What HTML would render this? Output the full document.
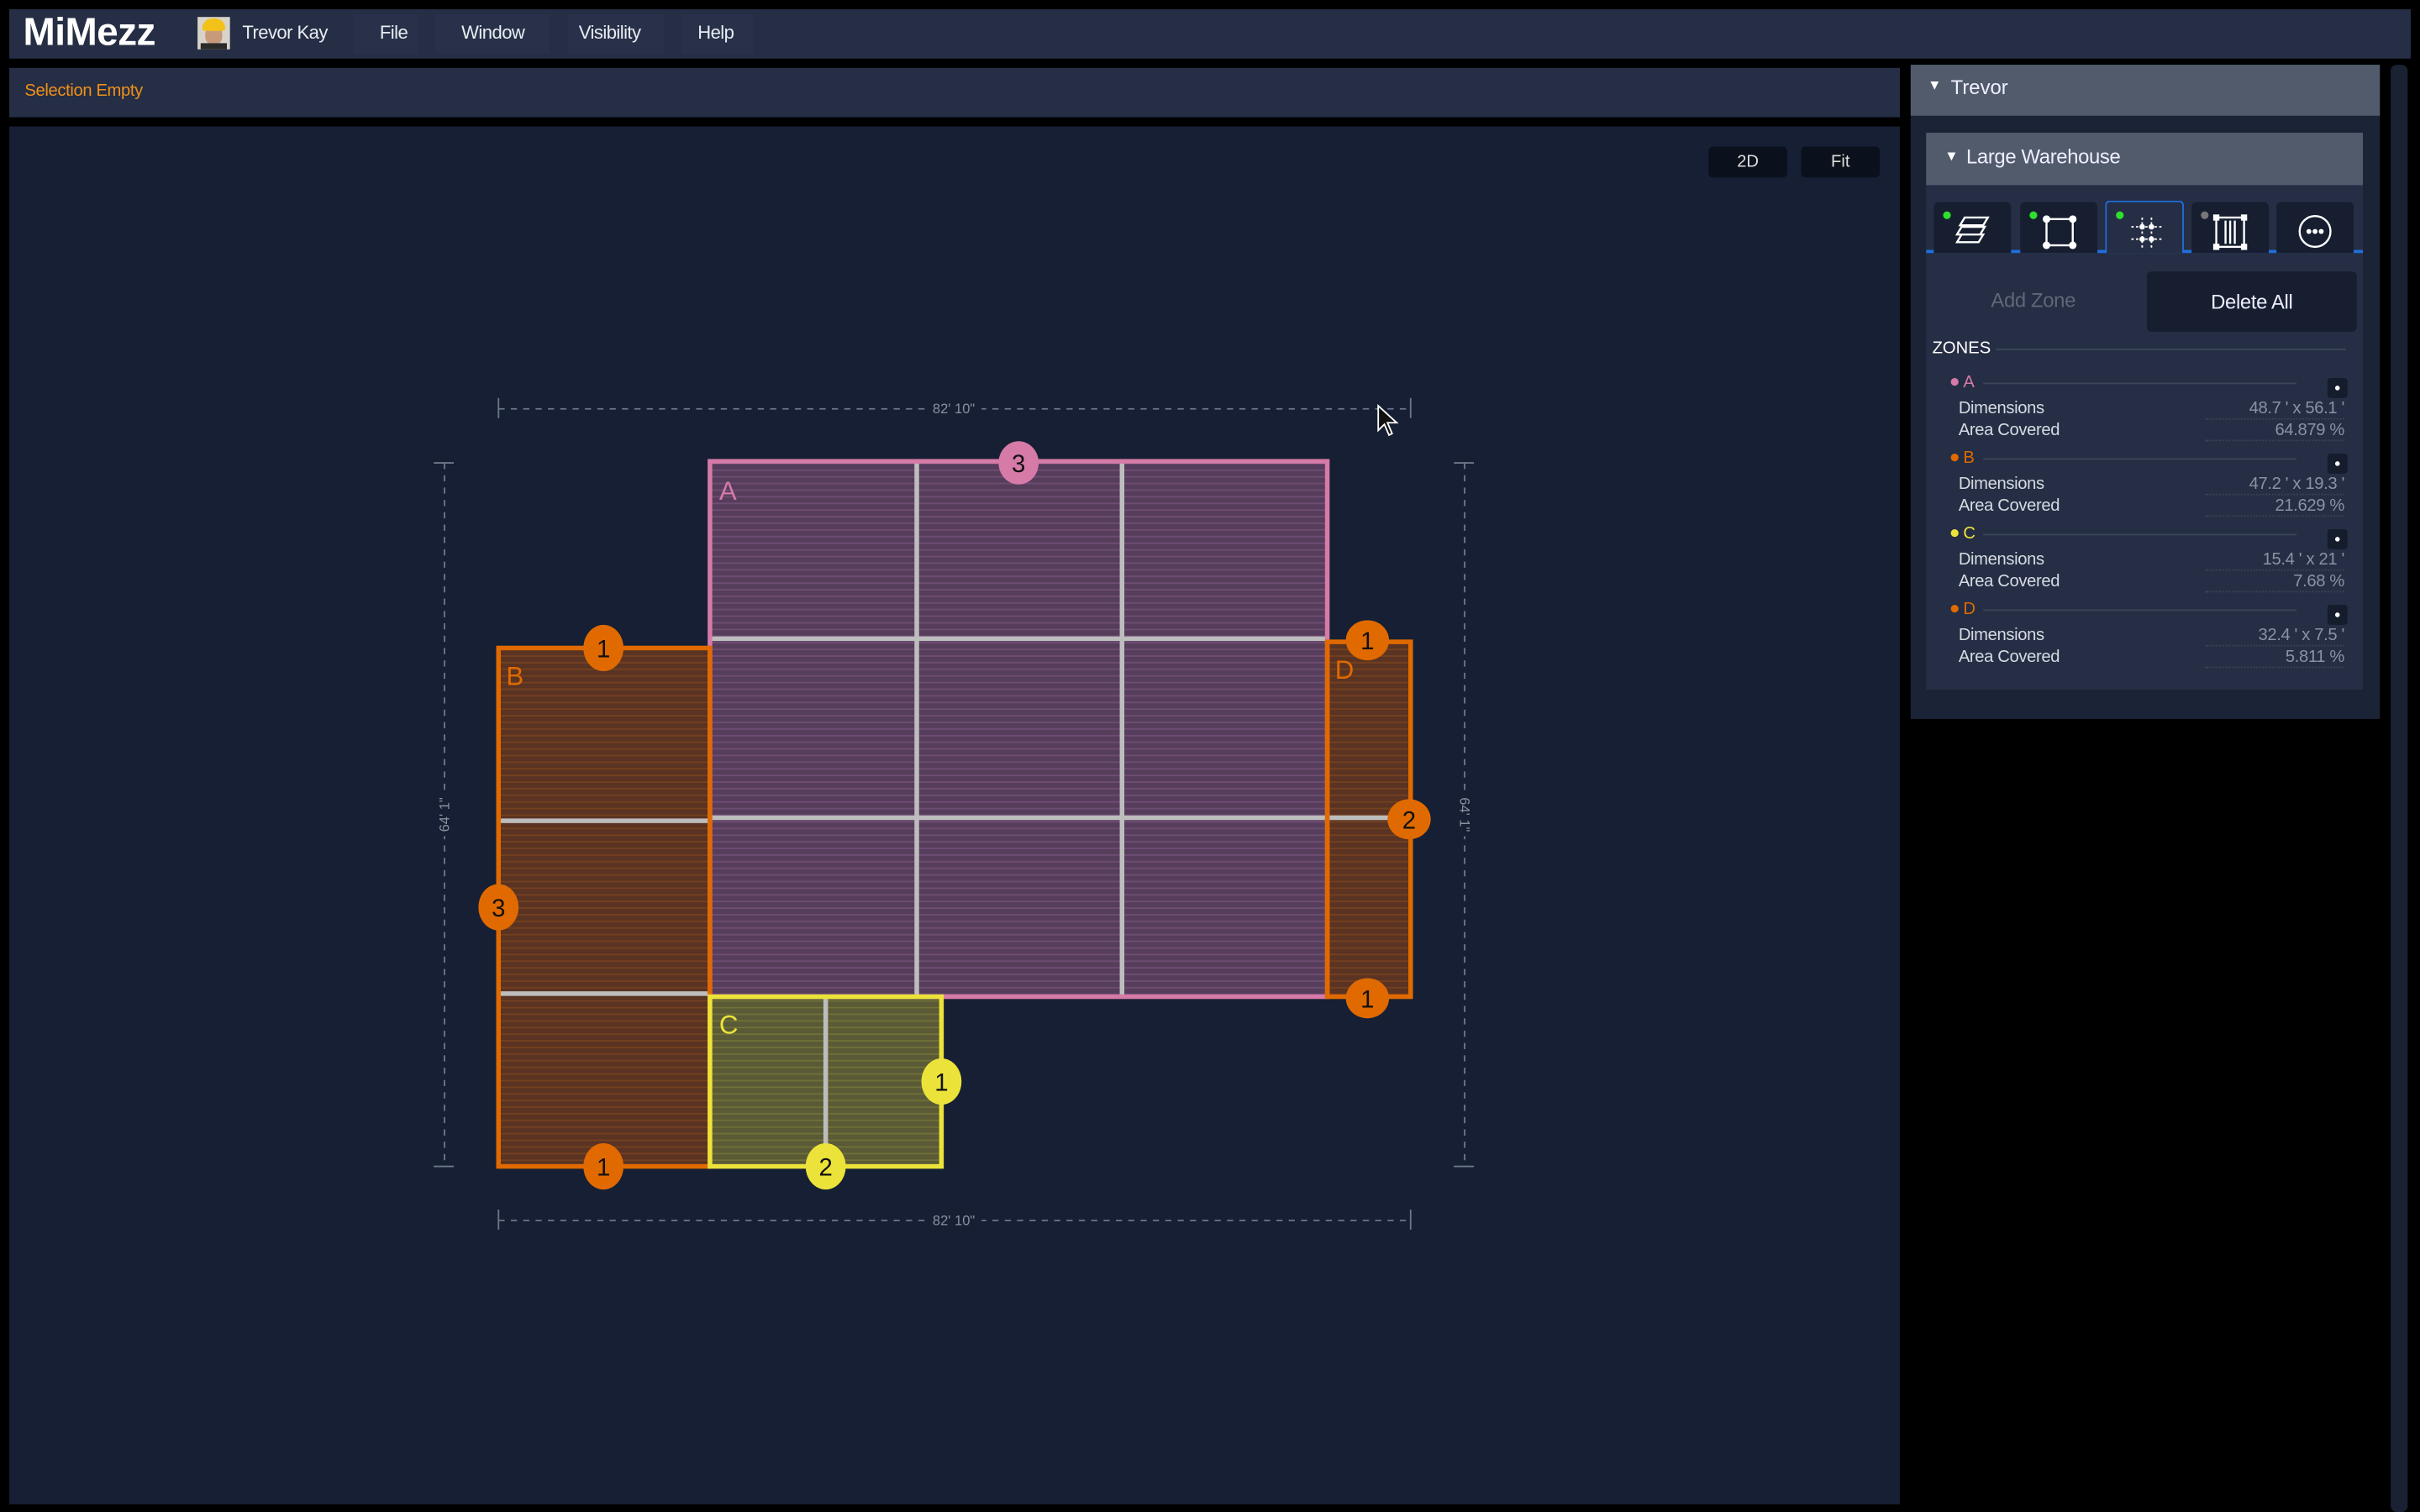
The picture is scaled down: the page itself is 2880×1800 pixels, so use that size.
<!DOCTYPE html>
<html><head><meta charset="utf-8"><style>
*{box-sizing:border-box;margin:0;padding:0}
html,body{width:2880px;height:1800px;background:#000;overflow:hidden}
#w{position:absolute;left:0;top:0;width:1568px;height:980px;transform:scale(1.836735);transform-origin:0 0;font-family:"Liberation Sans",sans-serif;color:#e8ecf2}
.abs{position:absolute}
.zl{position:absolute;left:1269px;font-size:11px;color:#d6dbe3;letter-spacing:-0.2px}
.zv{position:absolute;right:49px;font-size:11px;color:#8a93a3;text-align:right;width:90px;border-bottom:1px dotted #3a4458;letter-spacing:-0.2px}
.zh{position:absolute;left:1264px;font-size:11px}
.zh i{display:inline-block;width:5px;height:5px;border-radius:50%;margin-right:3px;vertical-align:1px}
.zline{position:absolute;left:1285px;width:203px;height:1px;background:#3c465a}
.zb{position:absolute;left:1508px;width:13px;height:13px;background:#151c2c;border-radius:2px}
.zb:after{content:"";position:absolute;left:5px;top:5px;width:3px;height:3px;background:#fff;border-radius:50%}
.tab{position:absolute;top:131px;width:50px;height:33px;background:#161e30;border-radius:3px 3px 0 0}
.dot{position:absolute;left:6px;top:6px;width:5px;height:5px;border-radius:50%;background:#2ee02e}
.m{position:absolute;top:14px;font-size:12px;letter-spacing:-0.3px}
</style></head><body><div id="w">
<div class="abs" style="left:6px;top:6px;width:1556px;height:32px;background:#252e44"></div>
<div class="abs" style="left:15px;top:7px;font-size:25px;font-weight:bold;letter-spacing:-0.3px;color:#fff">MiMezz</div>
<div class="abs" style="left:128px;top:11px;width:21px;height:21px;background:#d8d4cc;overflow:hidden">
 <div class="abs" style="left:5px;top:6px;width:11px;height:12px;background:#c89a7c;border-radius:5px"></div>
 <div class="abs" style="left:3px;top:1px;width:15px;height:8px;background:#f2c21a;border-radius:8px 8px 2px 2px"></div>
 <div class="abs" style="left:2px;top:17px;width:17px;height:5px;background:#2a2a2a"></div>
</div>
<div class="m" style="left:157px">Trevor Kay</div>
<div class="abs" style="left:229px;top:9px;width:42px;height:26px;background:#283149"></div>
<div class="m" style="left:246px">File</div>
<div class="abs" style="left:282px;top:9px;width:74px;height:26px;background:#283149"></div>
<div class="m" style="left:299px">Window</div>
<div class="abs" style="left:368px;top:9px;width:62px;height:26px;background:#283149"></div>
<div class="m" style="left:375px">Visibility</div>
<div class="abs" style="left:442px;top:9px;width:46px;height:26px;background:#283149"></div>
<div class="m" style="left:452px">Help</div>
<div class="abs" style="left:6px;top:44px;width:1225px;height:32px;background:#252e44"></div>
<div class="abs" style="left:16px;top:53px;font-size:11px;color:#f0901a;letter-spacing:-0.2px">Selection Empty</div>
<div class="abs" style="left:6px;top:82px;width:1225px;height:893px;background:#161f33"></div>
<div class="abs" style="left:1107px;top:95px;width:51px;height:20px;background:#0b111c;border-radius:3px;font-size:11px;text-align:center;line-height:20px;color:#ddd">2D</div>
<div class="abs" style="left:1167px;top:95px;width:51px;height:20px;background:#0b111c;border-radius:3px;font-size:11px;text-align:center;line-height:20px;color:#ddd">Fit</div>
<svg class="abs" style="left:0;top:0" width="1231" height="975" viewBox="0 0 1231 975">
<defs>
<pattern id="pa" width="10" height="4.3" patternUnits="userSpaceOnUse"><rect width="10" height="4.3" fill="#573d5c"/><rect y="3.3" width="10" height="1" fill="#6e4d73"/></pattern>
<pattern id="pb" width="10" height="4.3" patternUnits="userSpaceOnUse"><rect width="10" height="4.3" fill="#5a3322"/><rect y="3.3" width="10" height="1" fill="#74401f"/></pattern>
<pattern id="pc" width="10" height="4.3" patternUnits="userSpaceOnUse"><rect width="10" height="4.3" fill="#5a5a36"/><rect y="3.3" width="10" height="1" fill="#707038"/></pattern>
</defs>
<g stroke="#6d778a" stroke-width="1" fill="none">
<line x1="323" y1="265" x2="914" y2="265" stroke-dasharray="4 4"/><line x1="323" y1="258" x2="323" y2="271"/><line x1="914" y1="258" x2="914" y2="271"/>
<line x1="323" y1="791" x2="914" y2="791" stroke-dasharray="4 4"/><line x1="323" y1="784" x2="323" y2="797"/><line x1="914" y1="784" x2="914" y2="797"/>
<line x1="288" y1="300" x2="288" y2="756" stroke-dasharray="4 4"/><line x1="281" y1="300" x2="294" y2="300"/><line x1="281" y1="756" x2="294" y2="756"/>
<line x1="949" y1="300" x2="949" y2="756" stroke-dasharray="4 4"/><line x1="942" y1="300" x2="955" y2="300"/><line x1="942" y1="756" x2="955" y2="756"/>
</g>
<g font-size="9" fill="#8a92a0" font-family="Liberation Sans">
<rect x="600" y="258" width="36" height="12" fill="#161f33"/><text x="618" y="268" text-anchor="middle">82' 10"</text>
<rect x="600" y="785" width="36" height="12" fill="#161f33"/><text x="618" y="794" text-anchor="middle">82' 10"</text>
<rect x="282" y="512" width="12" height="30" fill="#161f33"/><text transform="translate(291,528) rotate(-90)" text-anchor="middle">64' 1"</text>
<rect x="943" y="512" width="12" height="30" fill="#161f33"/><text transform="translate(946,528) rotate(90)" text-anchor="middle">64' 1"</text>
</g>
<rect x="460" y="299" width="400" height="347" fill="url(#pa)"/>
<rect x="323" y="420" width="137" height="336" fill="url(#pb)"/>
<rect x="860" y="416" width="54" height="230" fill="url(#pb)"/>
<rect x="460" y="646" width="150" height="110" fill="url(#pc)"/>
<g stroke="#bdbdbd" stroke-width="3">
<line x1="594" y1="299" x2="594" y2="646"/><line x1="727" y1="299" x2="727" y2="646"/>
<line x1="460" y1="414" x2="860" y2="414"/><line x1="460" y1="530" x2="914" y2="530"/>
<line x1="323" y1="532" x2="460" y2="532"/><line x1="323" y1="644" x2="460" y2="644"/>
<line x1="535" y1="646" x2="535" y2="756"/>
</g>
<rect x="460" y="299" width="400" height="347" fill="none" stroke="#d67aa8" stroke-width="3"/>
<rect x="323" y="420" width="137" height="336" fill="none" stroke="#e06a00" stroke-width="3"/>
<rect x="860" y="416" width="54" height="230" fill="none" stroke="#e06a00" stroke-width="3"/>
<rect x="460" y="646" width="150" height="110" fill="none" stroke="#ece33a" stroke-width="3"/>
<g font-size="17" font-family="Liberation Sans">
<text x="466" y="324" fill="#d67aa8">A</text><text x="328" y="444" fill="#e06a00">B</text>
<text x="865" y="440" fill="#e06a00">D</text><text x="466" y="670" fill="#ece33a">C</text>
</g>
<g font-size="16" font-family="Liberation Sans" text-anchor="middle" fill="#111">
<ellipse cx="660" cy="300" rx="13" ry="14" fill="#d67aa8"/><text x="660" y="306">3</text>
<ellipse cx="391" cy="420" rx="13" ry="15" fill="#e06a00"/><text x="391" y="426">1</text>
<ellipse cx="323" cy="588" rx="13" ry="15" fill="#e06a00"/><text x="323" y="594">3</text>
<ellipse cx="391" cy="756" rx="13" ry="15" fill="#e06a00"/><text x="391" y="762">1</text>
<ellipse cx="886" cy="415" rx="14" ry="13" fill="#e06a00"/><text x="886" y="421">1</text>
<ellipse cx="913" cy="531" rx="14" ry="13" fill="#e06a00"/><text x="913" y="537">2</text>
<ellipse cx="886" cy="647" rx="14" ry="13" fill="#e06a00"/><text x="886" y="653">1</text>
<ellipse cx="610" cy="701" rx="13" ry="15" fill="#ece33a"/><text x="610" y="707">1</text>
<ellipse cx="535" cy="756" rx="13" ry="15" fill="#ece33a"/><text x="535" y="762">2</text>
</g>
<path d="M893 263 L893 279 L897 275 L900 282 L902 281 L899 274 L905 274 Z" fill="#111" stroke="#fff" stroke-width="1"/>
</svg>
<div class="abs" style="left:1238px;top:42px;width:304px;height:424px;background:#1b2336"></div>
<div class="abs" style="left:1238px;top:42px;width:304px;height:33px;background:#515b6c"></div>
<div class="abs" style="left:1249px;top:50px;font-size:9px;color:#fff">▼</div>
<div class="abs" style="left:1264px;top:49px;font-size:13px;color:#eef">Trevor</div>
<div class="abs" style="left:1248px;top:86px;width:283px;height:361px;background:#252e44"></div>
<div class="abs" style="left:1248px;top:86px;width:283px;height:34px;background:#515b6c"></div>
<div class="abs" style="left:1260px;top:96px;font-size:9px;color:#fff">▼</div>
<div class="abs" style="left:1274px;top:94px;font-size:13px;color:#eef;letter-spacing:-0.2px">Large Warehouse</div>
<div class="abs" style="left:1248px;top:162px;width:283px;height:2px;background:#1f6fe0"></div>
<div class="tab" style="left:1253px"><div class="dot"></div>
<svg class="abs" style="left:14px;top:8px" width="24" height="22" viewBox="0 0 24 22" fill="none" stroke="#fff" stroke-width="1.3"><path d="M6 2H21L18 7H3Z"/><path d="M4 8H19L16 13H1Z" fill="#161e30"/><path d="M4 13H18L15 18H1Z" fill="#161e30"/></svg></div>
<div class="tab" style="left:1309px"><div class="dot"></div>
<svg class="abs" style="left:14px;top:8px" width="24" height="24" viewBox="0 0 24 24" fill="none" stroke="#fff" stroke-width="1.3"><rect x="3" y="3" width="17" height="17"/><g fill="#fff"><circle cx="3" cy="3" r="1.8"/><circle cx="20" cy="3" r="1.8"/><circle cx="3" cy="20" r="1.8"/><circle cx="20" cy="20" r="1.8"/></g></svg></div>
<div class="tab" style="left:1364px;top:130px;width:51px;height:34px;background:#252e44;border:1.5px solid #1f6fe0;border-bottom:none"><div class="dot"></div>
<svg class="abs" style="left:14px;top:8px" width="24" height="24" viewBox="0 0 24 24" fill="none" stroke="#fff" stroke-width="1" stroke-dasharray="1.5 1.5"><line x1="9" y1="2" x2="9" y2="22"/><line x1="15" y1="2" x2="15" y2="22"/><line x1="2" y1="8" x2="22" y2="8"/><line x1="2" y1="16" x2="22" y2="16"/><g fill="#fff" stroke="none"><circle cx="9" cy="8" r="1.8"/><circle cx="15" cy="8" r="1.8"/><circle cx="9" cy="16" r="1.8"/><circle cx="15" cy="16" r="1.8"/></g></svg></div>
<div class="tab" style="left:1420px"><div class="dot" style="background:#777"></div>
<svg class="abs" style="left:13px;top:7px" width="24" height="26" viewBox="0 0 24 26" fill="none" stroke="#fff" stroke-width="1.3"><rect x="3" y="3" width="18" height="19"/><line x1="9" y1="5" x2="9" y2="20"/><line x1="12" y1="5" x2="12" y2="20"/><line x1="15" y1="5" x2="15" y2="20"/><g fill="#fff" stroke="none"><rect x="1" y="1" width="4" height="4"/><rect x="19" y="1" width="4" height="4"/><rect x="1" y="20" width="4" height="4"/><rect x="19" y="20" width="4" height="4"/></g></svg></div>
<div class="tab" style="left:1475px">
<svg class="abs" style="left:12px;top:6px" width="26" height="26" viewBox="0 0 26 26" fill="none" stroke="#fff" stroke-width="1.3"><circle cx="13" cy="13" r="10"/><g fill="#fff" stroke="none"><circle cx="9" cy="13" r="1.6"/><circle cx="13" cy="13" r="1.6"/><circle cx="17" cy="13" r="1.6"/></g></svg></div>
<div class="abs" style="left:1290px;top:187px;font-size:13px;color:#5f6878;letter-spacing:-0.2px">Add Zone</div>
<div class="abs" style="left:1391px;top:176px;width:136px;height:39px;background:#161e30;border-radius:3px;font-size:13px;text-align:center;line-height:39px;color:#eef;letter-spacing:-0.2px">Delete All</div>
<div class="abs" style="left:1252px;top:220px;font-size:11px;color:#fff">ZONES</div>
<div class="abs" style="left:1293px;top:226px;width:227px;height:1px;background:#3c465a"></div>
<div class="zh" style="top:242px;color:#d67aa8"><i style="background:#d67aa8"></i>A</div><div class="zline" style="top:248px"></div><div class="zb" style="top:245px"></div>
<div class="zl" style="top:259px">Dimensions</div><div class="zv" style="top:259px">48.7 ' x 56.1 '</div>
<div class="zl" style="top:273px">Area Covered</div><div class="zv" style="top:273px">64.879 %</div>
<div class="zh" style="top:291px;color:#e06a00"><i style="background:#e06a00"></i>B</div><div class="zline" style="top:297px"></div><div class="zb" style="top:294px"></div>
<div class="zl" style="top:308px">Dimensions</div><div class="zv" style="top:308px">47.2 ' x 19.3 '</div>
<div class="zl" style="top:322px">Area Covered</div><div class="zv" style="top:322px">21.629 %</div>
<div class="zh" style="top:340px;color:#ece33a"><i style="background:#ece33a"></i>C</div><div class="zline" style="top:346px"></div><div class="zb" style="top:343px"></div>
<div class="zl" style="top:357px">Dimensions</div><div class="zv" style="top:357px">15.4 ' x 21 '</div>
<div class="zl" style="top:371px">Area Covered</div><div class="zv" style="top:371px">7.68 %</div>
<div class="zh" style="top:389px;color:#e06a00"><i style="background:#e06a00"></i>D</div><div class="zline" style="top:395px"></div><div class="zb" style="top:392px"></div>
<div class="zl" style="top:406px">Dimensions</div><div class="zv" style="top:406px">32.4 ' x 7.5 '</div>
<div class="zl" style="top:420px">Area Covered</div><div class="zv" style="top:420px">5.811 %</div>
<div class="abs" style="left:1549px;top:42px;width:11px;height:938px;background:#1a2133;border-radius:4px"></div>
</div></body></html>
